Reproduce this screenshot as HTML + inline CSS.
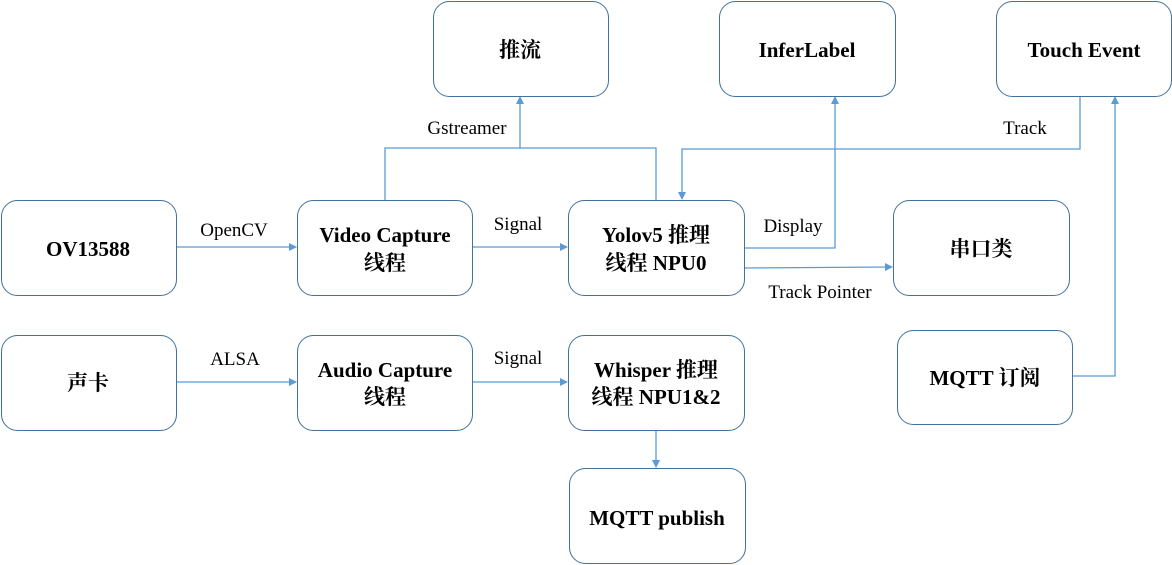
<!DOCTYPE html><html><head><meta charset="utf-8"><style>html,body{margin:0;padding:0;background:#fff}svg{display:block}
.b{fill:#fff;stroke:#41719C;stroke-width:1}
text{font-family:"Liberation Serif","DejaVu Serif Condensed","DejaVu Serif","Noto Serif CJK SC","Noto Sans CJK SC",serif}
.t{font-weight:bold;font-size:21px;fill:#000;text-anchor:middle}
.l{font-size:19px;fill:#000;text-anchor:middle}
.n{fill:none;stroke:#5B9BD5;stroke-width:1.3}
</style></head><body>
<svg width="1172" height="565" viewBox="0 0 1172 565">
<defs><marker id="a" markerWidth="8" markerHeight="8" refX="7" refY="4" orient="auto" markerUnits="userSpaceOnUse"><path d="M0,0L8,4L0,8z" fill="#5B9BD5"/></marker></defs>
<g class="n">
<path d="M176,247H296" marker-end="url(#a)"/>
<path d="M472,247H567" marker-end="url(#a)"/>
<path d="M385,200V148H656V200"/>
<path d="M520,148V97" marker-end="url(#a)"/>
<path d="M744,248H835V97" marker-end="url(#a)"/>
<path d="M744,268L892,267" marker-end="url(#a)"/>
<path d="M1080,96V149H682V199" marker-end="url(#a)"/>
<path d="M1072,376H1115V97" marker-end="url(#a)"/>
<path d="M176,382H296" marker-end="url(#a)"/>
<path d="M472,382H567" marker-end="url(#a)"/>
<path d="M656,430V467" marker-end="url(#a)"/>
</g>
<rect class="b" x="433.5" y="1.5" width="175" height="95" rx="16"/>
<rect class="b" x="719.5" y="1.5" width="176" height="95" rx="16"/>
<rect class="b" x="996.5" y="1.5" width="175" height="95" rx="16"/>
<rect class="b" x="1.5" y="200.5" width="175" height="95" rx="16"/>
<rect class="b" x="297.5" y="200.5" width="175" height="95" rx="16"/>
<rect class="b" x="568.5" y="200.5" width="176" height="95" rx="16"/>
<rect class="b" x="893.5" y="200.5" width="176" height="95" rx="16"/>
<rect class="b" x="1.5" y="335.5" width="175" height="95" rx="16"/>
<rect class="b" x="297.5" y="335.5" width="175" height="95" rx="16"/>
<rect class="b" x="568.5" y="335.5" width="176" height="95" rx="16"/>
<rect class="b" x="897.5" y="330.5" width="175" height="94" rx="16"/>
<rect class="b" x="569.5" y="468.5" width="176" height="95" rx="16"/>
<text class="t" x="520" y="57">推流</text>
<text class="t" x="807" y="57">InferLabel</text>
<text class="t" x="1084" y="57">Touch Event</text>
<text class="t" x="88" y="256">OV13588</text>
<text class="t" x="385" y="242">Video Capture</text>
<text class="t" x="385" y="270">线程</text>
<text class="t" x="656" y="242">Yolov5 推理</text>
<text class="t" x="656" y="270">线程 NPU0</text>
<text class="t" x="981" y="256">串口类</text>
<text class="t" x="88" y="390">声卡</text>
<text class="t" x="385" y="377">Audio Capture</text>
<text class="t" x="385" y="404">线程</text>
<text class="t" x="656" y="377">Whisper 推理</text>
<text class="t" x="656" y="404">线程 NPU1&amp;2</text>
<text class="t" x="985" y="385">MQTT 订阅</text>
<text class="t" x="657" y="525">MQTT publish</text>
<text class="l" x="467" y="134">Gstreamer</text>
<text class="l" x="1025" y="134">Track</text>
<text class="l" x="234" y="236">OpenCV</text>
<text class="l" x="518" y="230">Signal</text>
<text class="l" x="793" y="232">Display</text>
<text class="l" x="820" y="298">Track Pointer</text>
<text class="l" x="235" y="365">ALSA</text>
<text class="l" x="518" y="364">Signal</text>
</svg></body></html>
